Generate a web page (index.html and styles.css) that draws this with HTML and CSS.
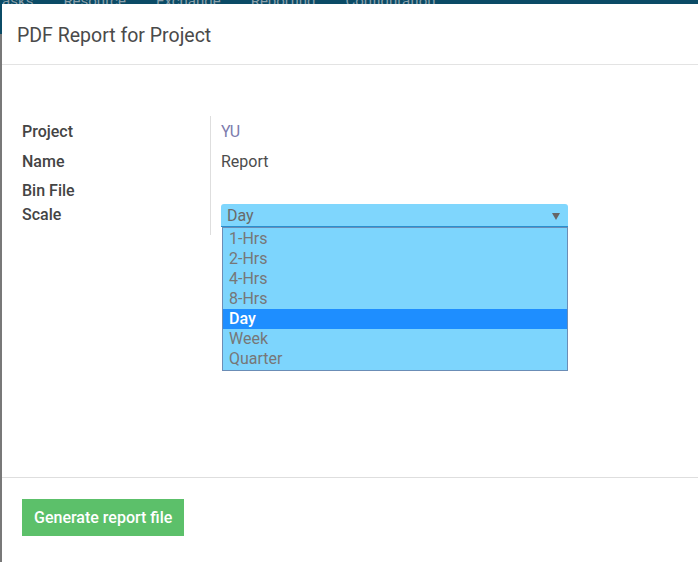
FILE: index.html
```html
<!DOCTYPE html>
<html>
<head>
<meta charset="utf-8">
<link rel="stylesheet" href="styles.css">
</head>
<body>
<div class="navbar">
  <div class="nav-links">
    <span>Tasks</span><span>Resource</span><span>Exchange</span><span>Reporting</span><span>Configuration</span>
  </div>
</div>
<div class="modal">
  <div class="modal-header">
    <h4 class="modal-title">PDF Report for Project</h4>
  </div>
  <div class="modal-body">
    <div class="form-grid">
      <div class="label">Project</div>
      <div class="value link">YU</div>
      <div class="label">Name</div>
      <div class="value">Report</div>
      <div class="label">Bin File</div>
      <div class="value"></div>
      <div class="label label-scale">Scale</div>
      <div class="value value-scale">
        <div class="select">
          <span class="select-text">Day</span>
          <span class="select-arrow"></span>
          <ul class="options">
            <li>1-Hrs</li>
            <li>2-Hrs</li>
            <li>4-Hrs</li>
            <li>8-Hrs</li>
            <li class="selected">Day</li>
            <li>Week</li>
            <li>Quarter</li>
          </ul>
        </div>
      </div>
    </div>
  </div>
  <div class="modal-footer">
    <button class="btn-generate">Generate report file</button>
  </div>
</div>
</body>
</html>
```

FILE: styles.css
```css
html, body {
  margin: 0;
  padding: 0;
  height: 100%;
}
body {
  background: #787878;
  font-family: Roboto, "Liberation Sans", sans-serif;
  overflow: hidden;
  position: relative;
}
.navbar {
  height: 34px;
  background: #0b4b66;
  overflow: hidden;
}
.nav-links {
  display: flex;
  margin-top: -9px;
  margin-left: -6px;
  font-size: 15px;
  line-height: 20px;
  color: #8aa0ab;
}
.nav-links span {
  margin-right: 30px;
}
.modal {
  position: absolute;
  top: 4px;
  left: 2px;
  right: 0;
  bottom: 0;
  background: #fff;
  display: flex;
  flex-direction: column;
}
.modal-header {
  height: 58px;
  padding-top: 2px;
  border-bottom: 1px solid #e3e3e3;
  display: flex;
  align-items: center;
  padding-left: 15px;
}
.modal-title {
  margin: 0;
  font-size: 19.5px;
  font-weight: 400;
  color: #4a4a4a;
}
.modal-body {
  flex: 1;
  padding: 51px 20px 0 20px;
}
.form-grid {
  display: grid;
  grid-template-columns: 188px 1fr;
  grid-template-rows: 30px 30px 28px auto;
}
.label {
  font-size: 16px;
  font-weight: 500;
  color: #444;
  display: flex;
  align-items: center;
}
.label-scale {
  align-items: flex-start;
  padding-top: 1px;
}
.value {
  border-left: 1px solid #dedede;
  padding-left: 10px;
  font-size: 16px;
  color: #4c4c4c;
  display: flex;
  align-items: center;
}
.value.link {
  color: #7c7bad;
}
.value-scale {
  padding-bottom: 8px;
  align-items: flex-start;
}
.select {
  position: relative;
  width: 341px;
  height: 22px;
  background: #7fd6fd;
  border-radius: 3px 3px 0 0;
  border-bottom: 1px solid #2a90cf;
  display: flex;
  align-items: center;
  padding-left: 6px;
  box-sizing: content-box;
}
.select-text {
  flex: 1;
  color: #6a6a6a;
  font-size: 16px;
}
.select-arrow {
  width: 0;
  height: 0;
  border-left: 4px solid transparent;
  border-right: 4px solid transparent;
  border-top: 7px solid #666;
  margin-right: 8px;
  margin-top: 2px;
}
.options {
  position: absolute;
  top: 23px;
  left: 1px;
  width: 344px;
  margin: 0;
  padding: 1px 0 1px 0;
  list-style: none;
  background: #7dd5fd;
  border: 1px solid #6b8db6;
}
.options li {
  height: 20px;
  line-height: 20px;
  padding-left: 6px;
  font-size: 16px;
  color: #777;
}
.options li.selected {
  background: #1e8eff;
  color: #fff;
  font-weight: 500;
}
.modal-footer {
  border-top: 1px solid #dedede;
  padding: 21px 20px 26px 20px;
}
.btn-generate {
  background: #5cc06a;
  color: #fff;
  border: none;
  font-family: Roboto, "Liberation Sans", sans-serif;
  font-size: 16px;
  font-weight: 500;
  height: 37px;
  padding: 0 12px;
}
```
